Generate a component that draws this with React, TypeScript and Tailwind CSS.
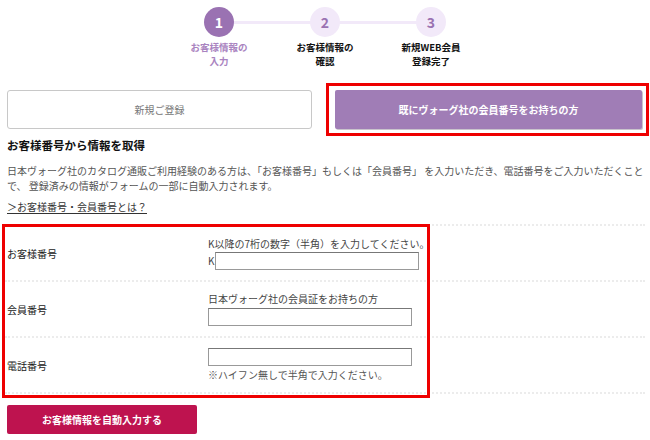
import React from "react";

const font = { fontFamily: '"Noto Sans CJK JP", "Noto Sans", sans-serif' };

function Step({ n, l1, l2, active }: { n: string; l1: string; l2: string; active?: boolean }) {
  return (
    <div className="relative z-10 flex w-[106px] flex-col items-center">
      <div
        className={
          active
            ? "flex h-[30px] w-[30px] items-center justify-center rounded-full bg-[#9a72b2] text-[14px] font-bold leading-none text-white"
            : "flex h-[30px] w-[30px] items-center justify-center rounded-full bg-[#f2e9f9] text-[14px] font-bold leading-none text-[#9a72b2]"
        }
      >
        {n}
      </div>
      <div
        className={
          "mt-[3px] text-center text-[9.5px] font-bold leading-[14px] " +
          (active ? "text-[#a983c0]" : "text-[#111]")
        }
      >
        <div>{l1}</div>
        <div>{l2}</div>
      </div>
    </div>
  );
}

function Row({ label, children }: { label: string; children: React.ReactNode }) {
  return (
    <div className="flex h-[56px] items-center border-b-2 border-dotted border-[#ececec]">
      <div className="w-[203px] pl-[2px] text-[10px] text-[#222]">{label}</div>
      <div className="flex flex-col">{children}</div>
    </div>
  );
}

export default function App() {
  return (
    <div className="relative h-[440px] w-[650px] overflow-hidden bg-white text-[#222]" style={font}>
      {/* stepper */}
      <div className="relative mx-auto flex w-[318px] pt-[7px]">
        <div className="absolute left-[53px] right-[53px] top-[21px] h-[3px] bg-[#f2e9f9]" />
        <Step n="1" l1="お客様情報の" l2="入力" active />
        <Step n="2" l1="お客様情報の" l2="確認" />
        <Step n="3" l1="新規WEB会員" l2="登録完了" />
      </div>

      {/* tabs */}
      <div className="mt-[15px] flex items-center pl-[7px]">
        <div className="flex h-[39px] w-[305px] items-center justify-center rounded-[3px] border border-[#c8c8c8] bg-white text-[10px] text-[#777]">
          新規ご登録
        </div>
        <div className="ml-[14px] border-[3px] border-[#ee0000] pb-[4px] pl-[6px] pr-[4px] pt-[4px]">
          <div className="flex h-[39px] w-[307px] items-center justify-center rounded-[2px] bg-[#a07db6] text-[10px] font-bold text-white shadow-[1px_1px_0_#c9c4cc]">
            既にヴォーグ社の会員番号をお持ちの方
          </div>
        </div>
      </div>

      {/* heading */}
      <div className="pl-[7px] pr-[2px]">
        <div className="text-[11.5px] font-bold leading-[18px] text-[#111]">お客様番号から情報を取得</div>
        <p className="mt-[9px] text-[10px] leading-[15px] text-[#555]">
          日本ヴォーグ社のカタログ通販ご利用経験のある方は、「お客様番号」もしくは「会員番号」 を入力いただき、電話番号をご入力いただくことで、 登録済みの情報がフォームの一部に自動入力されます。
        </p>
        <div className="mt-[7px] text-[10px] leading-[14px] text-[#333]">
          <span className="underline underline-offset-2">＞お客様番号・会員番号とは？</span>
        </div>
      </div>

      {/* form */}
      <div className="relative mx-[5px] mt-[10px] border-t-2 border-dotted border-[#ececec]">
        <Row label="お客様番号">
          <div className="text-[10px] leading-[14px] text-[#444]">K以降の7桁の数字（半角）を入力してください。</div>
          <div className="mt-[1px] flex items-center text-[10px] text-[#444]">
            <span className="w-[7px]">K</span>
            <input className="h-[18px] w-[204px] border border-[#999] border-t-[#777] bg-white outline-none" />
          </div>
        </Row>
        <Row label="会員番号">
          <div className="text-[10px] leading-[14px] text-[#444]">日本ヴォーグ社の会員証をお持ちの方</div>
          <input className="mt-[2px] h-[18px] w-[204px] border border-[#999] border-t-[#777] bg-white outline-none" />
        </Row>
        <Row label="電話番号">
          <input className="h-[18px] w-[204px] border border-[#999] border-t-[#777] bg-white outline-none" />
          <div className="mt-[2px] text-[10px] leading-[14px] text-[#555]">※ハイフン無しで半角で入力ください。</div>
        </Row>
      </div>

      <div className="mt-[11px] pl-[7px]">
        <button className="flex h-[29px] w-[190px] items-center justify-center rounded-[2px] bg-[#be134f] text-[10px] font-bold text-white">
          お客様情報を自動入力する
        </button>
      </div>

      {/* annotation box */}
      <div className="pointer-events-none absolute left-[2px] top-[224px] h-[174px] w-[428px] border-[3px] border-[#ee0000]" />
    </div>
  );
}
